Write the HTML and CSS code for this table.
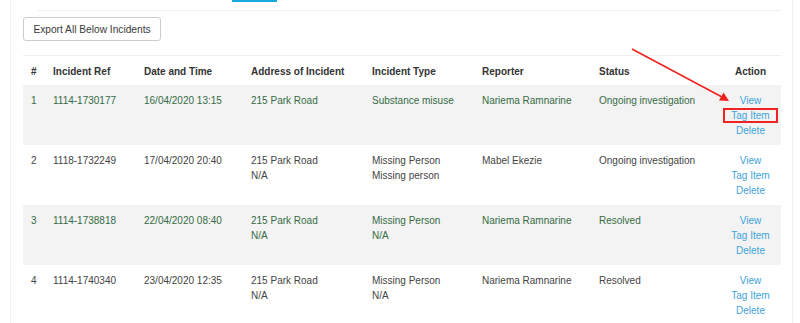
FILE: index.html
```html
<!DOCTYPE html>
<html lang="en">
<head>
<meta charset="utf-8">
<title>Incidents</title>
<link rel="stylesheet" href="styles.css">
</head>
<body>
<div class="page">
  <div class="tabs"><span class="tab-active"></span></div>
  <button class="btn" type="button">Export All Below Incidents</button>
  <table class="grid">
    <colgroup>
      <col class="c-num"><col class="c-ref"><col class="c-date"><col class="c-addr">
      <col class="c-type"><col class="c-rep"><col class="c-status"><col class="c-act">
    </colgroup>
    <thead>
      <tr>
        <th>#</th><th>Incident Ref</th><th>Date and Time</th><th>Address of Incident</th>
        <th>Incident Type</th><th>Reporter</th><th>Status</th><th class="act">Action</th>
      </tr>
    </thead>
    <tbody>
      <tr class="alt">
        <td>1</td><td>1114-1730177</td><td>16/04/2020 13:15</td><td>215 Park Road</td>
        <td>Substance misuse</td><td>Nariema Ramnarine</td><td>Ongoing investigation</td>
        <td class="act"><a>View</a><br><a class="marked">Tag Item</a><br><a>Delete</a></td>
      </tr>
      <tr>
        <td>2</td><td>1118-1732249</td><td>17/04/2020 20:40</td><td>215 Park Road<br>N/A</td>
        <td>Missing Person<br>Missing person</td><td>Mabel Ekezie</td><td>Ongoing investigation</td>
        <td class="act"><a>View</a><br><a>Tag Item</a><br><a>Delete</a></td>
      </tr>
      <tr class="alt">
        <td>3</td><td>1114-1738818</td><td>22/04/2020 08:40</td><td>215 Park Road<br>N/A</td>
        <td>Missing Person<br>N/A</td><td>Nariema Ramnarine</td><td>Resolved</td>
        <td class="act"><a>View</a><br><a>Tag Item</a><br><a>Delete</a></td>
      </tr>
      <tr>
        <td>4</td><td>1114-1740340</td><td>23/04/2020 12:35</td><td>215 Park Road<br>N/A</td>
        <td>Missing Person<br>N/A</td><td>Nariema Ramnarine</td><td>Resolved</td>
        <td class="act"><a>View</a><br><a>Tag Item</a><br><a>Delete</a></td>
      </tr>
    </tbody>
  </table>
</div>
<svg class="arrow" width="800" height="323" viewBox="0 0 800 323" aria-hidden="true">
  <line x1="632" y1="49" x2="722" y2="97" stroke="#f0201e" stroke-width="1.5"/>
  <polygon points="729,101 719,100.5 723.5,92.5" fill="#f0201e"/>
</svg>
</body>
</html>
```
FILE: styles.css
```css
html, body {
  margin: 0;
  padding: 0;
  background: #fff;
  overflow: hidden;
}
body {
  font-family: "Liberation Sans", Arial, Helvetica, sans-serif;
  color: #333;
  position: relative;
}
.page {
  margin-left: 10px;
  width: 758px;
  min-height: 100vh;
  padding: 0 11px 0 12px;
  border-left: 1px solid #f0f0f0;
  border-right: 1px solid #f0f0f0;
}
.tabs {
  height: 10px;
  margin-left: 15px;
  border-bottom: 1px solid #eeeeee;
}
.tab-active {
  display: block;
  margin-left: 194px;
  width: 45px;
  height: 2px;
  background: #19a9e1;
}
.btn {
  display: block;
  margin-top: 6px;
  width: 138px;
  height: 24px;
  padding: 0;
  border: 1px solid #cccccc;
  border-radius: 3px;
  background: #fff;
  color: #3a3a3a;
  font-family: "Liberation Sans", Arial, sans-serif;
  font-size: 10.2px;
  text-align: center;
}
.grid {
  margin-top: 14px;
  width: 758px;
  border-collapse: collapse;
  table-layout: fixed;
  font-size: 10px;
  line-height: 15px;
  border-top: 1px solid #eeeeee;
}
.c-num { width: 22px; }
.c-ref { width: 91px; }
.c-date { width: 107px; }
.c-addr { width: 121px; }
.c-type { width: 110px; }
.c-rep { width: 117px; }
.c-status { width: 129px; }
.c-act { width: 61px; }
.grid th {
  text-align: left;
  font-weight: bold;
  color: #333;
  padding: 8px 8px 6px 8px;
  white-space: nowrap;
}
.grid td {
  vertical-align: top;
  padding: 8px 8px 7px 8px;
  height: 45px;
  white-space: nowrap;
  color: #444;
}
.grid tr.alt td {
  background: #f3f3f3;
  color: #356b45;
}
.grid .act {
  text-align: center;
  padding-left: 0;
  padding-right: 0;
}
.grid td.act a,
.grid tr.alt td.act a {
  color: #3ea3dd;
  text-decoration: none;
}
.marked {
  position: relative;
}
.marked::after {
  content: "";
  position: absolute;
  left: -8px;
  right: -8px;
  top: -2px;
  bottom: -2px;
  border: 2px solid #ee2424;
}
.arrow {
  position: absolute;
  left: 0;
  top: 0;
  pointer-events: none;
}
```
